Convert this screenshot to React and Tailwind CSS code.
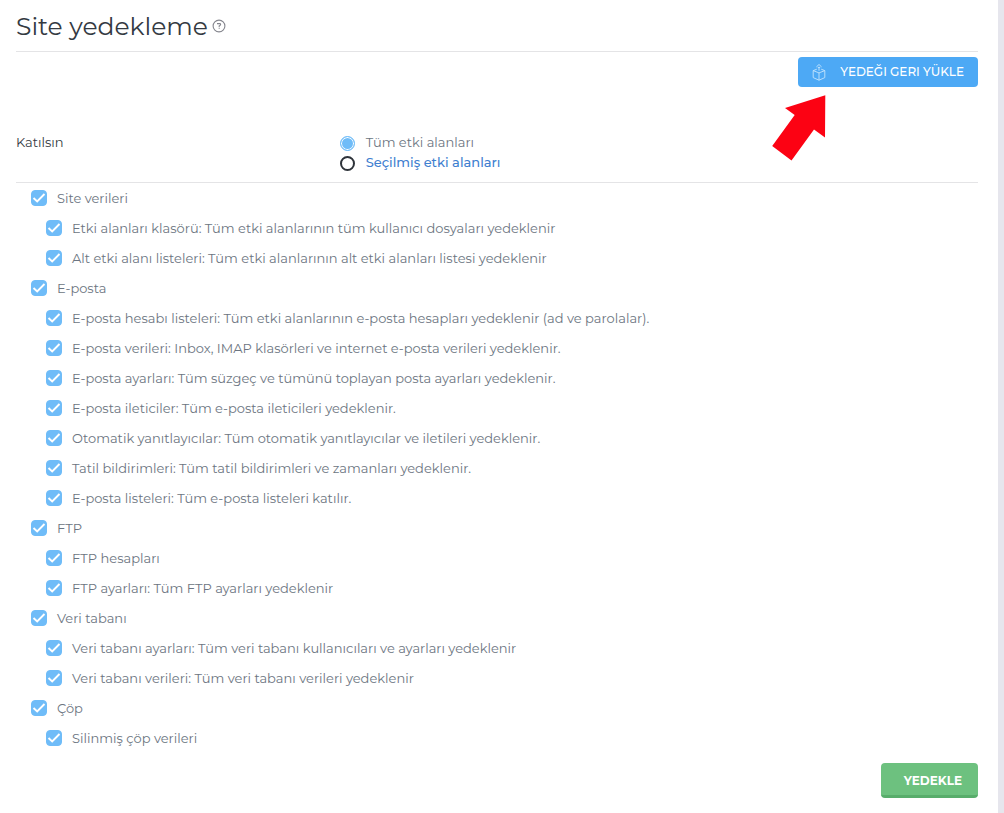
import React, { useState } from 'react'

const groups = [
  {
    id: 'site',
    label: 'Site verileri',
    items: [
      'Etki alanları klasörü: Tüm etki alanlarının tüm kullanıcı dosyaları yedeklenir',
      'Alt etki alanı listeleri: Tüm etki alanlarının alt etki alanları listesi yedeklenir',
    ],
  },
  {
    id: 'email',
    label: 'E-posta',
    items: [
      'E-posta hesabı listeleri: Tüm etki alanlarının e-posta hesapları yedeklenir (ad ve parolalar).',
      'E-posta verileri: Inbox, IMAP klasörleri ve internet e-posta verileri yedeklenir.',
      'E-posta ayarları: Tüm süzgeç ve tümünü toplayan posta ayarları yedeklenir.',
      'E-posta ileticiler: Tüm e-posta ileticileri yedeklenir.',
      'Otomatik yanıtlayıcılar: Tüm otomatik yanıtlayıcılar ve iletileri yedeklenir.',
      'Tatil bildirimleri: Tüm tatil bildirimleri ve zamanları yedeklenir.',
      'E-posta listeleri: Tüm e-posta listeleri katılır.',
    ],
  },
  {
    id: 'ftp',
    label: 'FTP',
    items: ['FTP hesapları', 'FTP ayarları: Tüm FTP ayarları yedeklenir'],
  },
  {
    id: 'database',
    label: 'Veri tabanı',
    items: [
      'Veri tabanı ayarları: Tüm veri tabanı kullanıcıları ve ayarları yedeklenir',
      'Veri tabanı verileri: Tüm veri tabanı verileri yedeklenir',
    ],
  },
  { id: 'trash', label: 'Çöp', items: ['Silinmiş çöp verileri'] },
]

const Checkbox = ({ label }) => (
  <label className="flex h-[30px] cursor-pointer items-center gap-2.5 whitespace-nowrap">
    <span className="grid shrink-0">
      <input
        type="checkbox"
        defaultChecked
        className="peer col-start-1 row-start-1 size-4 appearance-none rounded-[4px] border border-[#6fbcf8] bg-white checked:bg-[#6fbcf8]"
      />
      <svg viewBox="0 0 16 16" className="pointer-events-none invisible col-start-1 row-start-1 size-4 peer-checked:visible">
        <path d="M2.500 8 6.200 11.500 13.500 4" fill="none" stroke="#fff" strokeWidth="1.9" />
      </svg>
    </span>
    <span className="pt-0.5">{label}</span>
  </label>
)

const Radio = ({ checked, onChange }) => (
  <input
    type="radio"
    name="scope"
    checked={checked}
    onChange={onChange}
    className="size-[15px] appearance-none rounded-full border-2 border-[#2e333a] checked:border checked:border-[#6fbcf8] checked:bg-[#6fbcf8] checked:shadow-[inset_0_0_0_1px_white]"
  />
)

const HelpIcon = () => (
  <svg viewBox="0 0 14 14" className="size-3.5" fill="none" stroke="#85868e">
    <circle cx="7" cy="7" r="5.9" strokeWidth="1.1" />
    <path d="M5 4.600H8.200C9.100 5.300 8.500 6.300 7.200 6.900V8.200" strokeWidth="1.1" />
    <path d="M7.200 9.300v.8" strokeWidth="1.1" />
  </svg>
)

const RestoreIcon = () => (
  <svg viewBox="0 0 14 18" className="h-[18px] w-3.5" fill="none" stroke="#c4e4fd" strokeWidth="0.9" strokeLinejoin="round">
    <path d="M4.800 6.200 1.200 7.600v7L7 17.200l5.800-2.600v-7L9.200 6.200" />
    <path d="M1.200 7.600 7 9.900l5.800-2.300M7 9.900v7.300" />
    <path d="M7 7.800V4M4.400 3.900 7 1.500l2.600 2.400M5.800 4.400h2.400" />
  </svg>
)

const App = () => {
  const [scope, setScope] = useState('all')

  return (
    <div className="border-r-6 border-[#e6e6ed] bg-white pr-5 pl-4 font-['Montserrat','Inter',sans-serif] text-[13px] text-[#6c7581]">
      <header className="flex h-[52px] items-center gap-1 border-b border-[#e4e4e6]">
        <h1 className="text-[25px] leading-8 text-[#343a42]">Site yedekleme</h1>
        <button type="button" aria-label="Yardım">
          <HelpIcon />
        </button>
      </header>

      {/* Restore */}
      <div className="relative flex h-20 items-start justify-end pt-[5px]">
        <button
          type="button"
          className="flex h-[30px] items-center gap-3.5 rounded-[4px] bg-[#4da9f5] px-3.5 text-xs font-medium whitespace-nowrap text-white"
        >
          <RestoreIcon />
          YEDEĞI GERI YÜKLE
        </button>
        <svg viewBox="0 0 54 66" className="pointer-events-none absolute top-[43px] right-[152px] h-[66px] w-[54px]">
          <path d="M53.300.2 13 13l9.700 7L.2 51l19.300 14.500L42 34.500l11 8z" fill="#fc0213" />
        </svg>
      </div>

      {/* Domain scope */}
      <div role="radiogroup" aria-labelledby="scope-title" className="flex h-[51px] border-b border-[#e4e4e6]">
        <div id="scope-title" className="w-1/3 leading-5 text-[#343a42]">
          Katılsın
        </div>
        <div className="pt-px pl-[3px]">
          <label className="flex h-5 items-center gap-[11px]">
            <Radio checked={scope === 'all'} onChange={() => setScope('all')} />
            Tüm etki alanları
          </label>
          <label className="flex h-5 items-center gap-[11px] font-medium text-[#3f80d0]">
            <Radio checked={scope === 'selected'} onChange={() => setScope('selected')} />
            Seçilmiş etki alanları
          </label>
        </div>
      </div>

      <ul className="pl-[15px]">
        {groups.map((group) => (
          <li key={group.id}>
            <Checkbox label={group.label} />
            <ul className="pl-[15px]">
              {group.items.map((item) => (
                <li key={item}>
                  <Checkbox label={item} />
                </li>
              ))}
            </ul>
          </li>
        ))}
      </ul>

      <div className="flex justify-end pt-2.5 pb-[15px]">
        <button
          type="button"
          className="h-[35px] rounded-[4px] border-b-3 border-[#58ad6b] bg-[#6dc17f] pt-1 pr-4 pl-[23px] text-xs font-bold text-white"
        >
          YEDEKLE
        </button>
      </div>
    </div>
  )
}

export default App
